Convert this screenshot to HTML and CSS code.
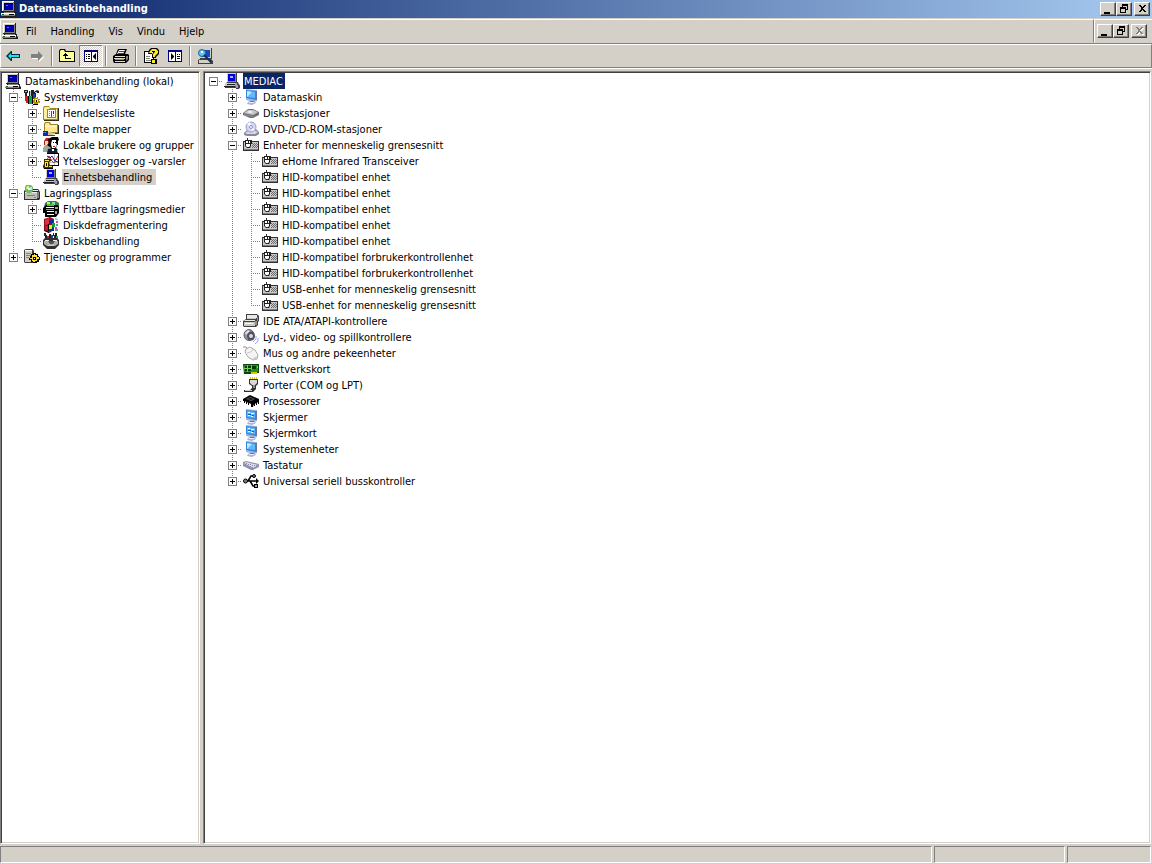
FILE: index.html
```html
<!DOCTYPE html>
<html lang="no">
<head>
    <meta charset="UTF-8">
    <meta name="viewport" content="width=device-width, initial-scale=1.0">
    <title>Datamaskinbehandling</title>
    <link rel="stylesheet" href="styles.css">
</head>
<body>
    <svg class="sprite" aria-hidden="true">
        <symbol id="pc" viewBox="0 0 16 16">
            <path fill="#202020" d="M1 0h13v11h1v2l1 1v2H1v-1H0v-3h2v-1H1z"/>
            <path fill="#d4d0c8" d="M1 0h12v10H1zM0 12h14v3H0z"/>
            <path fill="#fff" d="M1 0h12v1H1zM1 0h1v10H1zM0 12h14v1H0z"/>
            <path fill="#808080" d="M12 1h1v9h-1zM2 9h10v1H2zM3 11h10v1H3zM0 14h14v1H0z"/>
            <path fill="#0000b0" d="M3 2h9v7H3z"/>
            <path fill="#000050" d="M3 2h9v1H3zM3 2h1v7H3z"/>
            <path fill="#5070ff" d="M5 4h2v1H5z"/>
            <path fill="#000" d="M8 13h5v1H8z"/>
            <path fill="#008000" d="M1 13h2v1H1z"/>
        </symbol>
        <symbol id="device" viewBox="0 0 16 16">
            <path fill="#404040" d="M3 0h10v9h1l1 3v3H1v-3l2-3z"/>
            <path fill="#d4d0c8" d="M3 0h9v9H3zM2 10h11l1 2H1z"/>
            <path fill="#808080" d="M11 1h1v8h-1zM4 8h8v1H4z"/>
            <path fill="#0000d8" d="M4 1h7v7H4z"/>
            <path fill="#a0b8ff" d="M6 3h3v2H6z"/>
            <path fill="#202020" d="M3 11h9v1H3zM0 13h13v1H0z"/>
            <path fill="#c0c0c0" d="M1 12h11v1H1z"/>
            <path fill="#a0a0a8" d="M11 10h3l2 2v3l-1 1h-2l-2-3z"/>
            <path fill="#404058" d="M13 10h1v1h1v1h1v3h-1v1h-3v-1h2v-3h-1z"/>
        </symbol>
        <symbol id="tools" viewBox="0 0 16 16">
            <path fill="#202020" d="M0 1h4v3H3v4h2V2h2V1h3v2l3-2 2 1v2h-3v4H1V4H0z"/>
            <path fill="#b0c8d0" d="M1 2h2v1H1zM6 2h1v6H6zM11 3h2v1h-2z"/>
            <path fill="#d02020" d="M1 7h3v7H2V12H1z"/>
            <path fill="#10a050" d="M5 7h3v8H5z"/>
            <path fill="#2040c0" d="M9 5h2v5H9z"/>
            <path fill="#000" d="M4 7h1v8H4zM8 7h1v8H8z"/>
            <path fill="#b09000" d="M10 9h1V8h1v1h1V8h1v2h2v1h-1v1h1v2h-2v2h-1v-1h-2v1h-1v-2H9v-3h1z"/>
            <path fill="#ffe848" d="M11 10h3v3h-3z"/><path fill="#000" d="M12 11h1v2h-1zM9 15h5v1H9z"/>
        </symbol>
        <symbol id="events" viewBox="0 0 16 16">
            <path fill="#a08828" d="M0 3l1-2h5l1 2h8v12H0z"/>
            <path fill="#ffec9c" d="M1 3l1-1h4l1 2h7v10H1z"/>
            <path fill="#303020" d="M15 3h1v13H1v-1h14z"/>
            <path fill="#fff" d="M4 4h9v9H4z"/>
            <path fill="#808080" d="M4 4h9v1H4zM4 12h9v1H4zM4 4h1v9H4zM12 4h1v9h-1zM6 6h1v1H6zM6 8h1v1H6zM6 10h1v1H6z"/>
            <path fill="#d02020" d="M8 6h1v6H8z"/><path fill="#2020c0" d="M10 6h1v3h-1z"/><path fill="#d08020" d="M10 10h1v1h-1z"/>
        </symbol>
        <symbol id="shared" viewBox="0 0 16 16">
            <path fill="#a08828" d="M1 3l1-2h5l1 2h7v9H1z"/>
            <path fill="#ffe98c" d="M2 3l1-1h3l1 2h7v7H2z"/>
            <path fill="#fff8c0" d="M2 5h12v1H2z"/>
            <path fill="#303020" d="M15 4h1v9H5v-1h10z"/>
            <path fill="#1030a0" d="M0 10h5v5H0z"/><path fill="#5a78d8" d="M0 11h3v1H0z"/>
            <path fill="#d8c090" d="M5 11h3l2 1h2v1H9l2 1v1H5z"/>
            <path fill="#604020" d="M5 14h7v1H5z"/>
        </symbol>
        <symbol id="users" viewBox="0 0 16 16">
            <path fill="#b82020" d="M1 4l2-3h3l2 3-1 4H1z"/>
            <path fill="#f4d8a0" d="M2 4h3v4H2z"/>
            <path fill="#a0a8a0" d="M0 11l2-3h4l2 5-3 2H0z"/>
            <path fill="#000" d="M5 2l4-2h6l1 3-1 1-1 4-1 3 2 2-6 2-1-4-4-3 2-2z"/>
            <path fill="#fff" d="M9 3h4v3l1 2-2 3H9L8 7z"/>
            <path fill="#000" d="M10 5h1v1h-1zM12 5h2v1h-2zM14 0h1v8h-1z"/>
            <path fill="#d02020" d="M10 9h2v1h-2z"/>
            <path fill="#181830" d="M5 12l4-1 2 2 2-2 2 5H4z"/><path fill="#fff" d="M9 12h2v2H9z"/>
        </symbol>
        <symbol id="perf" viewBox="0 0 16 16">
            <path fill="#000" d="M4 0h12v13H4z"/>
            <path fill="#fff" d="M4 1h11v11H4z"/>
            <path fill="#c0c0c0" d="M4 6h11v1H4zM4 9h11v1H4zM11 1h1v11h-1z"/>
            <path fill="none" stroke="#d02020" d="M4 7l2-4 2 4 3 3 4-7"/>
            <path fill="none" stroke="#1020c0" d="M4 3l3 2 2-2 3 5 3 1"/>
            <path fill="#403000" d="M1 6h7v2l-2 1 1 3 3 1v2H1l-1-2 1-2z"/>
            <path fill="#ffe848" d="M2 7h4v1H2zM2 9h3v5H2zM6 13h3v1H6z"/>
            <path fill="#000" d="M3 10h1v3H3zM0 13h1v2h9v1H1z"/>
        </symbol>
        <symbol id="storage" viewBox="0 0 16 16">
            <path fill="#303030" d="M0 6l2-2h12l2 3v7l-1 1H0z"/>
            <path fill="#c0c0b8" d="M1 7h12v7H1z"/><path fill="#ececec" d="M3 5h11v1H3zM1 7h12v1H1z"/>
            <path fill="#808080" d="M3 10h8v1H3zM13 7h2v6h-2z"/><path fill="#60a020" d="M10 12h2v1h-2z"/>
            <path fill="#70b870" d="M2 0h5l2 2v4l-2 2H3L1 6V2z"/><path fill="#e8f860" d="M3 1h2v3H2z"/>
            <path fill="#a0f0ff" d="M6 2h2v3H6z"/><path fill="#fff" d="M4 3h2v2H4z"/>
        </symbol>
        <symbol id="removable" viewBox="0 0 16 16">
            <path fill="#407840" d="M2 2l3-2h8l3 2v4H1z"/>
            <path fill="#b0ff70" d="M4 1h3v3H4z"/><path fill="#70e0c0" d="M9 1h3v3H9z"/>
            <path fill="#000" d="M0 7l3-3h12l1 2v6l-3 4H2v-4H0z"/>
            <path fill="#fff" d="M3 6h8v1H3zM4 10h7v1H4zM4 13h7v1H4z"/>
            <path fill="#a0a0a0" d="M12 6h3v2h-3zM12 10h2v3h-2zM3 8h8v1H3z"/>
            <path fill="#50c040" d="M4 3h7v2H4z"/>
        </symbol>
        <symbol id="defrag" viewBox="0 0 16 16">
            <path fill="#a00820" d="M1 2l6-2 4 2v11l-5 3-5-3z"/>
            <path fill="#e03040" d="M2 3l4-2v6L2 8z"/>
            <path fill="#102898" d="M6 3h4v4H6zM7 11h4v3H7z"/>
            <path fill="#10a040" d="M9 6h3v4H9z"/><path fill="#f0e020" d="M6 8h3v4H6z"/>
            <path fill="#c01838" d="M2 9h3v4H2z"/><path fill="#80d8e8" d="M12 1h2v1h1v1h-3z"/>
            <path fill="#e040b0" d="M13 4h2v2h-2zM12 10h2v2h-2z"/><path fill="#40b090" d="M13 7h2v2h-2zM12 12h3v2h-3z"/>
            <path fill="#000" d="M1 13l5 2v1l-5-2zM5 7h1v7H5z"/>
        </symbol>
        <symbol id="diskman" viewBox="0 0 16 16">
            <path fill="#202020" d="M1 0h2v2h1v4H2V3H1zM6 1h2v5H6zM10 0h1v2h1V0h2v3h-1v3h-2V3h-1z"/>
            <path fill="#c02040" d="M4 3h2v3H4z"/><path fill="#1838c0" d="M8 2h2v4H8z"/><path fill="#20a050" d="M13 3h2v3h-2z"/>
            <path fill="#303030" d="M0 7l2-2h12l2 2v5l-4 4H4l-4-4z"/>
            <path fill="#b0b0a8" d="M1 8h14v3l-3 2H4l-3-2z"/><path fill="#eee" d="M2 7h4v1H2zM10 7h4v1h-4z"/>
            <path fill="#505050" d="M5 8h7l-2 3H7z"/><path fill="#d0d0d0" d="M5 12h6v1H5z"/><path fill="#70c020" d="M3 10h1v1H3z"/>
        </symbol>
        <symbol id="services" viewBox="0 0 16 16">
            <path fill="#404040" d="M0 1l2-1h7l1 2v12H1l-1-1z"/>
            <path fill="#d4d0c8" d="M1 2h7v11H1z"/><path fill="#fff" d="M1 1h7v1H1z"/>
            <path fill="#808080" d="M2 4h5v1H2zM2 6h5v1H2zM2 8h3v1H2z"/>
            <path fill="#000" d="M7 5h2V4h3v1h2v2h1v1h1v3h-1v2h-2v1H9v-1H7v-2H5V9h1V7h1z"/>
            <path fill="#ffe030" d="M8 6h2V5h1v1h2v2h2v2h-2v2h-2v1H9v-1H8v-2H6V9h2z"/>
            <path fill="#000" d="M9 8h3v3H9z"/><path fill="#fff" d="M10 9h1v1h-1z"/>
        </symbol>
        <symbol id="screen" viewBox="0 0 16 16">
            <path fill="#a8b4d8" d="M3 0l11 1v11l-2 1 1 1-4 2-5-1 1-2 2-1-4-1z"/>
            <path fill="#3088e0" d="M3 1l10 1v9L3 9z"/>
            <path fill="#60b8ff" d="M4 2l8 1v6L4 8z"/><path fill="#c0ecff" d="M4 2l5 1-5 5z"/>
            <path fill="#6870a8" d="M13 2h1v9h-1zM7 12h4v1H7z"/><path fill="#eef" d="M6 13h5v1H6z"/>
        </symbol>
        <symbol id="display" viewBox="0 0 16 16">
            <path fill="#a8b4d8" d="M3 0l11 1v11l-2 1 1 1-4 2-5-1 1-2 2-1-4-1z"/>
            <path fill="#3088e0" d="M3 1l10 1v9L3 9z"/>
            <path fill="#60b8ff" d="M4 2l8 1v6L4 8z"/>
            <path fill="#e8f8ff" d="M5 3h2v1H5zM8 4h3v1H8zM5 6h2v1H5zM8 7h2v1H8z"/><path fill="#1060b0" d="M5 5h3v1H5zM9 6h2v1H9z"/>
            <path fill="#6870a8" d="M13 2h1v9h-1zM7 12h4v1H7z"/><path fill="#eef" d="M6 13h5v1H6z"/>
        </symbol>
        <symbol id="disk" viewBox="0 0 16 16">
            <path fill="#707078" d="M0 8l5-4h5l6 3v3l-6 3H7L0 10z"/>
            <path fill="#c8c8cc" d="M1 8l4-3h5l5 2-5 3z"/><path fill="#909098" d="M1 9l9 2v1L1 10z"/>
            <path fill="#f8f8f8" d="M4 7l3-1 3 1-3 1z"/><path fill="#40a040" d="M12 10h1v1h-1z"/>
        </symbol>
        <symbol id="cdrom" viewBox="0 0 16 16">
            <path fill="#8888a0" d="M1 12l3-3 9-1 3 3v2l-3 2H4l-3-1z"/><path fill="#d8d8e4" d="M2 12l3-2h8l2 1-3 2H4z"/>
            <circle cx="8" cy="6" r="5" fill="#d4d8f8" stroke="#9c9cc8"/>
            <path fill="#fff" d="M8 6L4 3l3-2zM8 6l4 3-3 1z"/><circle cx="8" cy="6" r="1.5" fill="#fff" stroke="#9090b0"/>
        </symbol>
        <symbol id="hid" viewBox="0 0 16 16">
            <path fill="#303030" d="M0 4h2V3h2V1h1v2h4v1h7v10H0z"/>
            <path fill="#c8c8c8" d="M1 5h14v7H1z"/><path fill="#808080" d="M1 12h14v1H1z"/>
            <path fill="#707070" d="M9 6h1v1H9zM11 6h1v1h-1zM13 6h1v1h-1zM10 7h1v1h-1zM12 7h1v1h-1zM14 7h1v1h-1zM9 8h1v1H9zM11 8h1v1h-1zM13 8h1v1h-1zM10 9h1v1h-1zM12 9h1v1h-1zM14 9h1v1h-1zM9 10h1v1H9zM11 10h1v1h-1zM13 10h1v1h-1z"/>
            <path fill="#202020" d="M2 3h6v6l-1 2H4L2 9zM8 4h1v3H8z"/>
            <path fill="#fff" d="M3 4h2v2H3zM6 4h1v2H6zM3 7h4v2L6 10H4L3 9z"/>
        </symbol>
        <symbol id="ide" viewBox="0 0 16 16">
            <path fill="#404040" d="M3 1h11l2 2v5l-1 1v3l-2 2H1l-1-1V8l3-2z"/>
            <path fill="#e8e8e4" d="M4 2h10v3H4zM2 7h10v1H1z"/>
            <path fill="#c8c8c4" d="M4 5h9v1H4zM1 9h11v4H1z"/><path fill="#909090" d="M14 4h1v4h-1zM12 8h2v4h-2z"/>
            <path fill="#f8f8f8" d="M2 10h8v1H2z"/>
        </symbol>
        <symbol id="sound" viewBox="0 0 16 16">
            <ellipse cx="6" cy="6" rx="5" ry="5.5" fill="#909098" stroke="#606068"/>
            <ellipse cx="8" cy="7" rx="4" ry="4.5" fill="#505060"/><circle cx="8" cy="7" r="2" fill="#d8d8e0"/>
            <path fill="#e0e0e8" d="M2 4l3-3 2 1-4 4z"/>
            <path fill="none" stroke="#a0a8e8" d="M13 7v3l-3 3M15 9v3l-3 3"/>
        </symbol>
        <symbol id="mouse" viewBox="0 0 16 16">
            <path fill="none" stroke="#909098" d="M0 2h3l2 2"/>
            <path fill="#f4f4f6" stroke="#b0a8a8" d="M3 4l4-2 5 3 3 5-1 4-4 1-5-3-3-5z"/>
            <path fill="none" stroke="#c8c8d0" d="M4 8l4-1 2-3"/><path fill="#d0ccd0" d="M9 14l5-3-1 3-3 1z"/>
        </symbol>
        <symbol id="network" viewBox="0 0 16 16">
            <path fill="#084808" d="M0 3h16v9H9v1H1z"/><path fill="#209020" d="M1 4h14v7H1z"/>
            <path fill="#083808" d="M2 5h2v2H2zM5 5h3v2H5zM9 5h4v3H9zM2 8h2v2H2zM5 8h3v2H5z"/>
            <path fill="#70d050" d="M4 4h1v7H4zM8 4h1v5H8zM1 7h7v1H1zM14 5h1v2h-1z"/>
            <path fill="#e0c800" d="M8 11h6v2H8z"/>
        </symbol>
        <symbol id="port" viewBox="0 0 16 16">
            <path fill="#e8c820" d="M7 0h1v2H7zM9 0h1v2H9zM11 0h1v2h-1zM13 0h1v2h-1z"/>
            <path fill="#303030" d="M6 2h9v5l-2 2v3l-3 3H1v-2h6l2-2V9L6 7z"/>
            <path fill="#d8d8d8" d="M7 3h7v3l-2 2H9L7 6z"/><path fill="#909090" d="M10 8h2v3h-2z"/><path fill="#c8c8c8" d="M2 13h7v1H2z"/>
        </symbol>
        <symbol id="cpu" viewBox="0 0 16 16">
            <path fill="#000" d="M0 6l7-4 9 4v5h-1V9l-1 1v2h-1v-2l-1 1v2h-1v-2l-1 3H8v-3l-2-1v2H5v-2L4 9v2H3V9L2 8v2H1V8H0z"/>
            <path fill="#606060" d="M3 6l4-2 5 2-4 2z"/><path fill="#101010" d="M4 6l3-1 4 1-3 1z"/>
        </symbol>
        <symbol id="keyboard" viewBox="0 0 16 16">
            <path fill="#9090b0" d="M0 5l3-1 13 3v3l-6 3H8L0 9z"/><path fill="#dcdcec" d="M1 6l2-1 12 3-5 3z"/>
            <path fill="#8888b0" d="M3 6h1v1H3zM5 7h1v1H5zM7 7h1v1H7zM9 8h1v1H9zM11 8h1v1h-1zM7 9h1v1H7zM9 10h1v1H9zM13 8h1v1h-1z"/>
        </symbol>
        <symbol id="usb" viewBox="0 0 16 16">
            <path fill="none" stroke="#000" stroke-width="1.5" d="M2 8h12M5 8l3-5h3M7 8l3 5h2"/>
            <circle cx="2.5" cy="8" r="2" fill="#808080" stroke="#000"/><path fill="#000" d="M13 5l3 3-3 3zM11 11h4v4h-4z"/>
            <path fill="#a0a0a0" d="M12 12h2v2h-2z"/>
            <circle cx="11" cy="3" r="1.5" fill="#808080" stroke="#000"/>
        </symbol>
        <symbol id="back" viewBox="0 0 16 16">
            <path fill="#003040" d="M1 8l5-5h1v3h8v4H7v3H6z"/><path fill="#20e0f0" d="M3 8l3-3v2h8v2H6v2z"/>
        </symbol>
        <symbol id="forward" viewBox="0 0 16 16">
            <path fill="#fff" d="M3 7h7V5l5 4-5 5v-3H3z"/><path fill="#808080" d="M2 6h7V3l5 5-5 5v-3H2z"/>
        </symbol>
        <symbol id="up" viewBox="0 0 16 16">
            <path fill="#000" d="M0 3l1-2h5l1 2h8l1 1v10H0z"/><path fill="#ffff98" d="M1 3l1-1h3l1 2h9v9H1z"/>
            <path fill="#000" d="M6 5h1v1h1v1h1v1H7v2h5v1H6V8H4V7h1V6h1z"/>
        </symbol>
        <symbol id="show-tree" viewBox="0 0 16 16">
            <path fill="#000080" d="M1 2h14v12H1z"/><path fill="#fff" d="M2 4h6v9H2zM9 4h5v9H9z"/>
            <path fill="#000" d="M3 6h1v1H3zM5 6h2v1H5zM3 8h1v1H3zM5 8h2v1H5zM3 10h1v1H3zM5 10h2v1H5zM13 5v7l-3-3V8z"/>
        </symbol>
        <symbol id="print" viewBox="0 0 16 16">
            <path fill="#000" d="M5 1h9l-2 5h3l1 1v5l-3 3H1l-1-2V8l3-2z"/>
            <path fill="#fff" d="M6 2h6l-2 4H4z"/><path fill="#404040" d="M6 3h5v1H6zM5 5h5v1H5z"/>
            <path fill="#808080" d="M13 8h2v3l-2 2z"/>
            <path fill="#e4e0d8" d="M2 8h10v1H2zM1 10h11v1H1zM2 13h10v1H2z"/><path fill="#909090" d="M2 11h9v1H2z"/><path fill="#e0d020" d="M9 10h2v1H9z"/>
        </symbol>
        <symbol id="help" viewBox="0 0 16 16">
            <path fill="#000" d="M1 3h10v12H1z"/><path fill="#fff" d="M2 4h8v10H2z"/><path fill="#808080" d="M3 8h4v1H3zM3 10h4v1H3zM3 12h6v1H3z"/>
            <path fill="#000" d="M6 2l2-2h6l2 2v4l-3 3v1h-4V6l3-2H9v2H5z"/><path fill="#ffe820" d="M7 3l2-2h4l2 2v2l-3 3v1h-2V6l2-2V3H9v2H6z"/>
            <path fill="#000" d="M8 11h6v5H8z"/><path fill="#ffe820" d="M9 12h3v3H9z"/>
        </symbol>
        <symbol id="show-action" viewBox="0 0 16 16">
            <path fill="#000080" d="M1 2h14v12H1z"/><path fill="#fff" d="M2 4h6v9H2zM9 4h5v9H9z"/>
            <path fill="#000" d="M10 6h1v1h-1zM12 6h1v1h-1zM10 8h3v1h-3zM10 10h3v1h-3zM4 5v7l3-3V8z"/>
        </symbol>
        <symbol id="scan" viewBox="0 0 16 16">
            <path fill="#404040" d="M2 0h13v11h-1l2 2v3H1v-4l2-1z"/><path fill="#d4d0c8" d="M2 0h12v10H2zM2 12h11v3H2z"/>
            <path fill="#1848c0" d="M4 2h9v7H4z"/><circle cx="5" cy="5" r="3.5" fill="#60c8f0" stroke="#2060a0"/>
            <path fill="#fff" d="M4 3h2v2H4z"/><path fill="none" stroke="#103058" stroke-width="2" d="M7 7l7 7"/>
        </symbol>
    </svg>

    <div class="window">
        <header class="titlebar">
            <svg class="icon"><use href="#pc"/></svg>
            <h1>Datamaskinbehandling</h1>
            <div class="window-buttons">
                <button class="win-btn" aria-label="Minimer"><svg viewBox="0 0 12 10"><path d="M2 8h6v2H2z"/></svg></button>
                <button class="win-btn" aria-label="Gjenopprett"><svg viewBox="0 0 12 10"><path fill-rule="evenodd" d="M4 0h6v6H8V5h1V2H5v1H4zM2 3h6v6H2zM3 5v3h4V5z"/></svg></button>
                <button class="win-btn win-close" aria-label="Lukk"><svg viewBox="0 0 12 10"><path d="M2 1h2l2 2 2-2h2L7 4v1l3 3H8L6 6 4 8H2l3-3V4z"/></svg></button>
            </div>
        </header>

        <div class="menubar">
            <nav class="menus">
                <svg class="icon"><use href="#pc"/></svg>
                <button>Fil</button>
                <button>Handling</button>
                <button>Vis</button>
                <button>Vindu</button>
                <button>Hjelp</button>
            </nav>
            <div class="window-buttons child-buttons">
                <button class="win-btn" aria-label="Minimer vindu"><svg viewBox="0 0 12 10"><path d="M2 8h6v2H2z"/></svg></button>
                <button class="win-btn" aria-label="Gjenopprett vindu"><svg viewBox="0 0 12 10"><path fill-rule="evenodd" d="M4 0h6v6H8V5h1V2H5v1H4zM2 3h6v6H2zM3 5v3h4V5z"/></svg></button>
                <button class="win-btn win-close" aria-label="Lukk vindu" disabled><svg viewBox="0 0 12 10"><path d="M2 1h2l2 2 2-2h2L7 4v1l3 3H8L6 6 4 8H2l3-3V4z"/></svg></button>
            </div>
        </div>

        <div class="toolbar">
            <button aria-label="Tilbake"><svg class="icon"><use href="#back"/></svg></button>
            <button aria-label="Frem" disabled><svg class="icon"><use href="#forward"/></svg></button>
            <span class="separator"></span>
            <button aria-label="Opp ett nivå"><svg class="icon"><use href="#up"/></svg></button>
            <button class="pressed" aria-label="Vis konsolltre"><svg class="icon"><use href="#show-tree"/></svg></button>
            <span class="separator"></span>
            <button aria-label="Skriv ut"><svg class="icon"><use href="#print"/></svg></button>
            <span class="separator"></span>
            <button aria-label="Hjelp"><svg class="icon"><use href="#help"/></svg></button>
            <button aria-label="Vis handlinger"><svg class="icon"><use href="#show-action"/></svg></button>
            <span class="separator"></span>
            <button aria-label="Søk etter maskinvareendringer"><svg class="icon"><use href="#scan"/></svg></button>
        </div>

        <main class="panes">
            <section class="pane console-tree">
                <div class="row"><svg class="icon"><use href="#pc"/></svg><span class="label">Datamaskinbehandling (lokal)</span></div>
                <ul class="tree">
                    <li>
                        <div class="row"><button class="toggle open" aria-label="Skjul"></button><svg class="icon"><use href="#tools"/></svg><span class="label">Systemverktøy</span></div>
                        <ul class="tree">
                            <li><div class="row"><button class="toggle" aria-label="Utvid"></button><svg class="icon"><use href="#events"/></svg><span class="label">Hendelsesliste</span></div></li>
                            <li><div class="row"><button class="toggle" aria-label="Utvid"></button><svg class="icon"><use href="#shared"/></svg><span class="label">Delte mapper</span></div></li>
                            <li><div class="row"><button class="toggle" aria-label="Utvid"></button><svg class="icon"><use href="#users"/></svg><span class="label">Lokale brukere og grupper</span></div></li>
                            <li><div class="row"><button class="toggle" aria-label="Utvid"></button><svg class="icon"><use href="#perf"/></svg><span class="label">Ytelseslogger og -varsler</span></div></li>
                            <li><div class="row leaf"><svg class="icon"><use href="#device"/></svg><span class="label inactive">Enhetsbehandling</span></div></li>
                        </ul>
                    </li>
                    <li>
                        <div class="row"><button class="toggle open" aria-label="Skjul"></button><svg class="icon"><use href="#storage"/></svg><span class="label">Lagringsplass</span></div>
                        <ul class="tree">
                            <li><div class="row"><button class="toggle" aria-label="Utvid"></button><svg class="icon"><use href="#removable"/></svg><span class="label">Flyttbare lagringsmedier</span></div></li>
                            <li><div class="row leaf"><svg class="icon"><use href="#defrag"/></svg><span class="label">Diskdefragmentering</span></div></li>
                            <li><div class="row leaf"><svg class="icon"><use href="#diskman"/></svg><span class="label">Diskbehandling</span></div></li>
                        </ul>
                    </li>
                    <li><div class="row"><button class="toggle" aria-label="Utvid"></button><svg class="icon"><use href="#services"/></svg><span class="label">Tjenester og programmer</span></div></li>
                </ul>
            </section>

            <section class="pane device-tree">
                <ul class="tree root">
                    <li>
                        <div class="row"><button class="toggle open" aria-label="Skjul"></button><svg class="icon"><use href="#device"/></svg><span class="label selected">MEDIAC</span></div>
                        <ul class="tree">
                            <li><div class="row"><button class="toggle" aria-label="Utvid"></button><svg class="icon"><use href="#screen"/></svg><span class="label">Datamaskin</span></div></li>
                            <li><div class="row"><button class="toggle" aria-label="Utvid"></button><svg class="icon"><use href="#disk"/></svg><span class="label">Diskstasjoner</span></div></li>
                            <li><div class="row"><button class="toggle" aria-label="Utvid"></button><svg class="icon"><use href="#cdrom"/></svg><span class="label">DVD-/CD-ROM-stasjoner</span></div></li>
                            <li>
                                <div class="row"><button class="toggle open" aria-label="Skjul"></button><svg class="icon"><use href="#hid"/></svg><span class="label">Enheter for menneskelig grensesnitt</span></div>
                                <ul class="tree">
                                    <li><div class="row leaf"><svg class="icon"><use href="#hid"/></svg><span class="label">eHome Infrared Transceiver</span></div></li>
                                    <li><div class="row leaf"><svg class="icon"><use href="#hid"/></svg><span class="label">HID-kompatibel enhet</span></div></li>
                                    <li><div class="row leaf"><svg class="icon"><use href="#hid"/></svg><span class="label">HID-kompatibel enhet</span></div></li>
                                    <li><div class="row leaf"><svg class="icon"><use href="#hid"/></svg><span class="label">HID-kompatibel enhet</span></div></li>
                                    <li><div class="row leaf"><svg class="icon"><use href="#hid"/></svg><span class="label">HID-kompatibel enhet</span></div></li>
                                    <li><div class="row leaf"><svg class="icon"><use href="#hid"/></svg><span class="label">HID-kompatibel enhet</span></div></li>
                                    <li><div class="row leaf"><svg class="icon"><use href="#hid"/></svg><span class="label">HID-kompatibel forbrukerkontrollenhet</span></div></li>
                                    <li><div class="row leaf"><svg class="icon"><use href="#hid"/></svg><span class="label">HID-kompatibel forbrukerkontrollenhet</span></div></li>
                                    <li><div class="row leaf"><svg class="icon"><use href="#hid"/></svg><span class="label">USB-enhet for menneskelig grensesnitt</span></div></li>
                                    <li><div class="row leaf"><svg class="icon"><use href="#hid"/></svg><span class="label">USB-enhet for menneskelig grensesnitt</span></div></li>
                                </ul>
                            </li>
                            <li><div class="row"><button class="toggle" aria-label="Utvid"></button><svg class="icon"><use href="#ide"/></svg><span class="label">IDE ATA/ATAPI-kontrollere</span></div></li>
                            <li><div class="row"><button class="toggle" aria-label="Utvid"></button><svg class="icon"><use href="#sound"/></svg><span class="label">Lyd-, video- og spillkontrollere</span></div></li>
                            <li><div class="row"><button class="toggle" aria-label="Utvid"></button><svg class="icon"><use href="#mouse"/></svg><span class="label">Mus og andre pekeenheter</span></div></li>
                            <li><div class="row"><button class="toggle" aria-label="Utvid"></button><svg class="icon"><use href="#network"/></svg><span class="label">Nettverkskort</span></div></li>
                            <li><div class="row"><button class="toggle" aria-label="Utvid"></button><svg class="icon"><use href="#port"/></svg><span class="label">Porter (COM og LPT)</span></div></li>
                            <li><div class="row"><button class="toggle" aria-label="Utvid"></button><svg class="icon"><use href="#cpu"/></svg><span class="label">Prosessorer</span></div></li>
                            <li><div class="row"><button class="toggle" aria-label="Utvid"></button><svg class="icon"><use href="#display"/></svg><span class="label">Skjermer</span></div></li>
                            <li><div class="row"><button class="toggle" aria-label="Utvid"></button><svg class="icon"><use href="#display"/></svg><span class="label">Skjermkort</span></div></li>
                            <li><div class="row"><button class="toggle" aria-label="Utvid"></button><svg class="icon"><use href="#screen"/></svg><span class="label">Systemenheter</span></div></li>
                            <li><div class="row"><button class="toggle" aria-label="Utvid"></button><svg class="icon"><use href="#keyboard"/></svg><span class="label">Tastatur</span></div></li>
                            <li><div class="row"><button class="toggle" aria-label="Utvid"></button><svg class="icon"><use href="#usb"/></svg><span class="label">Universal seriell busskontroller</span></div></li>
                        </ul>
                    </li>
                </ul>
            </section>
        </main>

        <footer class="statusbar">
            <div class="status-main"></div>
            <div class="status-mid"></div>
            <div class="status-end"></div>
        </footer>
    </div>
</body>
</html>
```
FILE: styles.css
```css
* {
    box-sizing: border-box;
}
body {
    margin: 0;
    background-color: #d4d0c8;
    color: #000;
    font-family: Tahoma, "DejaVu Sans Condensed", "DejaVu Sans", sans-serif;
    font-size: 11px;
    line-height: 18px;
}
button {
    margin: 0;
    padding: 0;
    border: 0;
    background: none;
    color: inherit;
    font: inherit;
}
.sprite {
    display: none;
}
.icon {
    display: block;
    flex: none;
    width: 16px;
    height: 16px;
}
.window {
    display: flex;
    flex-direction: column;
    height: 100vh;
}

/* Title bar */
.titlebar {
    display: flex;
    align-items: center;
    height: 18px;
    padding: 0 2px 0 1px;
    background: linear-gradient(to right, #0a246a, #a6caf0);
    color: #fff;
}
.titlebar h1 {
    flex: 1;
    margin: 0;
    padding-left: 2px;
    font-size: 11px;
    font-weight: bold;
}
.window-buttons {
    display: flex;
    align-items: center;
}
.win-btn {
    width: 16px;
    height: 14px;
    border: 1px solid;
    border-color: #fff #404040 #404040 #fff;
    background-color: #d4d0c8;
    box-shadow: inset -1px -1px #808080;
}
.win-btn svg {
    display: block;
    width: 12px;
    height: 10px;
    margin-left: 1px;
    shape-rendering: crispEdges;
}
.win-close {
    margin-left: 2px;
}
.win-btn:disabled svg {
    fill: #808080;
    filter: drop-shadow(1px 1px #fff);
}

/* Menu and tool bars */
.menubar {
    display: flex;
    height: 26px;
    padding-top: 1px;
    border-bottom: 1px solid #808080;
}
.menus {
    display: flex;
    flex: 1;
    align-items: center;
    padding-left: 1px;
    border: 1px solid;
    border-color: #fff #808080 #d4d0c8 #fff;
}
.menus .icon {
    margin-right: 1px;
}
.menus button {
    padding: 1px 7px 0;
}
.child-buttons {
    padding: 0 4px 0 2px;
    border: 1px solid;
    border-color: #fff transparent #d4d0c8 #fff;
}
.toolbar {
    display: flex;
    align-items: center;
    height: 24px;
    border: 1px solid;
    border-color: #fff #808080 #808080 #fff;
}
.toolbar button {
    display: flex;
    align-items: center;
    justify-content: center;
    width: 24px;
    height: 22px;
}
.toolbar .pressed {
    border: 1px solid;
    border-color: #808080 #fff #fff #808080;
    background: repeating-conic-gradient(#fff 0 25%, #d4d0c8 0 50%) 0 0 / 2px 2px;
}
.separator {
    width: 2px;
    height: 20px;
    margin: 0 2px;
    border-left: 1px solid #808080;
    border-right: 1px solid #fff;
}

/* Panes */
.panes {
    display: flex;
    flex: 1;
    gap: 3px;
    min-height: 0;
    padding: 2px 1px 0 0;
    border-top: 1px solid #fff;
}
.pane {
    overflow: hidden;
    border: 1px solid;
    border-color: #808080 #fff #fff #808080;
    background-color: #fff;
    box-shadow: inset 1px 1px #404040, inset -1px -1px #d4d0c8;
    padding: 1px;
    white-space: nowrap;
}
.console-tree {
    flex: none;
    width: 200px;
    padding-left: 4px;
}
.device-tree {
    flex: 1;
}

/* Trees */
.tree {
    margin: 0;
    padding: 0;
    list-style: none;
}
.tree .tree {
    padding-left: 19px;
}
.tree > li {
    background: repeating-linear-gradient(#808080 0 1px, transparent 1px 2px) 8px 0 / 1px 100% no-repeat;
}
.tree > li:last-child {
    background-size: 1px 8px;
}
.root > li {
    background: none;
}
.row {
    display: flex;
    align-items: center;
    height: 16px;
}
.tree .row {
    background: repeating-linear-gradient(to right, #808080 0 1px, transparent 1px 2px) 8px 8px / 10px 1px no-repeat;
}
.leaf {
    padding-left: 19px;
}
.toggle {
    flex: none;
    width: 9px;
    height: 9px;
    margin: 0 6px 0 4px;
    border: 1px solid #808080;
    background:
        linear-gradient(#000, #000) center / 5px 1px no-repeat,
        linear-gradient(#000, #000) center / 1px 5px no-repeat,
        #fff;
}
.toggle.open {
    background: linear-gradient(#000, #000) center / 5px 1px no-repeat, #fff;
}
.label {
    height: 16px;
    margin-left: 3px;
    padding: 0 2px 0 1px;
}
.selected {
    background-color: #0a246a;
    color: #fff;
}
.inactive {
    padding-right: 4px;
    background-color: #d4d0c8;
}

/* Status bar */
.statusbar {
    display: flex;
    gap: 2px;
    height: 20px;
    padding: 2px 1px 1px 0;
}
.statusbar div {
    border: 1px solid;
    border-color: #808080 #fff #fff #808080;
}
.status-main {
    flex: 1;
}
.status-mid {
    width: 131px;
}
.status-end {
    width: 84px;
}
```
